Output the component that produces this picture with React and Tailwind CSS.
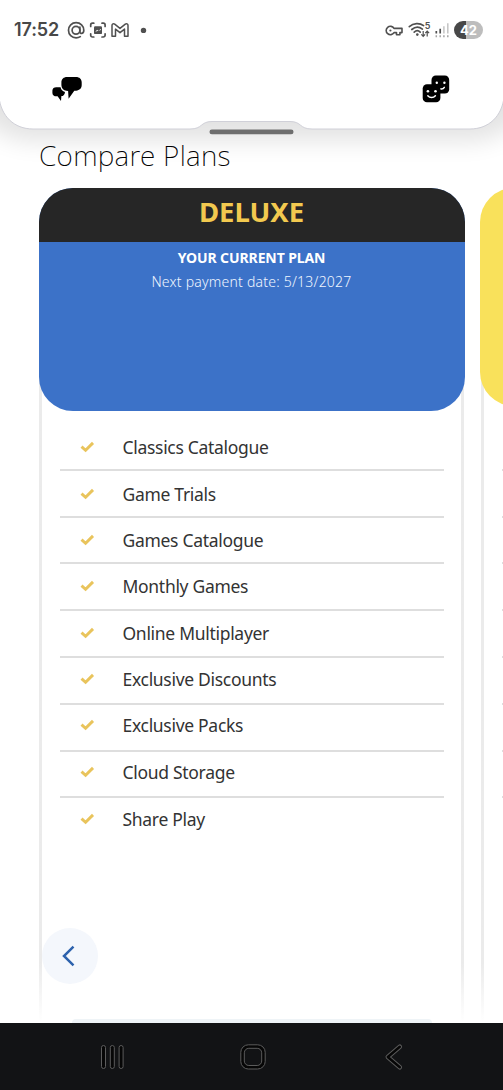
import React from 'react';

const features = [
    'Classics Catalogue',
    'Game Trials',
    'Games Catalogue',
    'Monthly Games',
    'Online Multiplayer',
    'Exclusive Discounts',
    'Exclusive Packs',
    'Cloud Storage',
    'Share Play',
];

// --- STATUS BAR ---
const StatusIcons = () => (
    <svg className="ml-2 h-6 w-[86px]" viewBox="66 18 86 24" fill="none" stroke="#505050" strokeWidth="1.7" strokeLinecap="round">
        {/* at sign */}
        <circle cx="76" cy="30.3" r="3.9" />
        <path d="M79.9 27v4.4c0 3.2 3.9 2.5 3.9-1.2 0-4.3-3.4-7.5-7.7-7.5s-7.6 3.3-7.6 7.6 3.3 7.5 7.6 7.5c1.7 0 3-.4 4.2-1.2" />
        {/* screenshot frame */}
        <path d="M93.8 23.2h-1.3a1.8 1.8 0 0 0-1.8 1.8v1.4M102 23.2h1.3a1.8 1.8 0 0 1 1.8 1.8v1.4M90.7 33.8v1.4a1.8 1.8 0 0 0 1.8 1.8h1.3M105.1 33.8v1.4a1.8 1.8 0 0 1-1.8 1.8H102" />
        <rect x="94" y="26.3" width="8" height="7.8" rx="1.2" fill="#505050" stroke="none" />
        <path d="M95.3 31.7l1.8-2 1.2 1 2.7-1.7v1z" fill="#fff" stroke="none" />
        {/* mail */}
        <path d="M112 36.2V25.4c0-1.5 1.6-2.1 2.7-1.2l5.3 4.2 5.3-4.2c1.1-.9 2.7-.3 2.7 1.2v10.8h-3.5v-7.1l-4.5 3.6-4.5-3.6v7.1z" strokeWidth="1.5" strokeLinejoin="round" />
        <circle cx="143.5" cy="30.4" r="2.7" fill="#505050" stroke="none" />
    </svg>
);

const ConnectionIcons = () => (
    <svg className="h-6 w-[66px]" viewBox="384 18 66 24" fill="none" stroke="#505050" strokeWidth="1.6">
        {/* key */}
        <path d="M394 28.4h8v4.2h-2.1v2.2h-3.4v-2.2H394a4.2 4.2 0 1 1 0-4.2z" strokeLinejoin="round" />
        <circle cx="390.4" cy="30.5" r="1.1" fill="#505050" stroke="none" />
        {/* wifi */}
        <path d="M409.3 26.6c4.2-3.8 10.4-3.9 14.3-1M411.8 29.5c3.4-2.9 7.4-2.9 10.6-.4M414.2 32.1c1.9-1.7 4.2-1.7 6 0" strokeLinecap="round" strokeWidth="1.7" />
        <circle cx="417.3" cy="34.6" r="1.3" fill="#505050" stroke="none" />
        <path d="M423.2 31v5M421.3 34.4l1.9 2 1.9-2M427.2 36.5v-5M425.3 33.2l1.9-2 1.9 2" strokeWidth="1.2" />
        <text x="424.8" y="28.6" className="font-['Inter',sans-serif] text-[9px] font-semibold" fill="#505050" stroke="none">5</text>
        {/* signal */}
        <path d="M436.3 31v2.4M440.2 28.8v4.6" strokeWidth="1.7" />
        <path d="M443.9 26.2v7.2M447.8 23.2v10.2" stroke="#c4c4c4" strokeWidth="1.5" />
        <path d="M436.3 35.3v2M440.2 35.3v2M443.9 35.3v2M447.8 35.3v2" stroke="#a5a5a5" strokeWidth="1.5" />
    </svg>
);

const StatusBar = () => (
    <div className="flex h-[60px] items-center pl-[14px] pr-[20px]">
        <span className="w-[44px] whitespace-nowrap font-['Inter',sans-serif] text-[18px] font-semibold leading-6 tracking-[-0.1px] text-[#484848]">17:52</span>
        <StatusIcons />
        <div className="ml-auto flex items-center">
            <ConnectionIcons />
            <div className="ml-[4px] flex h-[18px] w-[29px] items-center justify-center rounded-full bg-linear-to-r from-[#484848] from-42% to-[#bdbdbd] to-42% font-['Inter',sans-serif] text-[13px] font-bold leading-none text-white">42</div>
        </div>
    </div>
);

// --- TOP SHEET ---
const ChatIcon = () => (
    <svg className="h-[26px] w-[30px]" viewBox="52 76 30 26">
        <path d="M56.2 87.2H60.6C61 89.6 62.6 91.2 65 91.9C64.8 94.6 63.4 96 61.4 96.1L61 101L57.6 96.3H56.4C54.2 96.3 52.4 95 52.4 92.9V90.5C52.4 88.4 54.2 87.2 56.2 87.2Z" />
        <path d="M67 76.9h9c3.5 0 5.7 2.2 5.7 5.4v2.8c0 3.3-2.2 5.4-5.5 5.6l-1.900.1-5.700 8-.5-7.900-1.700-.2c-3-.2-5-2.300-5-5.400v-2.900c0-3.300 2.300-5.500 5.600-5.500z" />
    </svg>
);

const FacesIcon = () => (
    <svg className="h-[30px] w-[30px]" viewBox="421 74 30 30">
        <rect x="431.5" y="75.6" width="17.7" height="18" rx="4.3" />
        <circle cx="436.8" cy="82.7" r="1.2" fill="#fff" />
        <circle cx="444.4" cy="82.7" r="1.2" fill="#fff" />
        <path d="M440.3 88.8c1.7.4 3.2-.1 4-1.5" stroke="#fff" strokeWidth="1.5" strokeLinecap="round" fill="none" />
        <rect x="422.7" y="84.3" width="17.7" height="18" rx="4.3" />
        <circle cx="427.9" cy="91.3" r="1.3" fill="#fff" />
        <circle cx="435.5" cy="91.3" r="1.3" fill="#fff" />
        <path d="M427.8 95.8c2 2.4 5.6 2.4 7.6 0" stroke="#fff" strokeWidth="1.5" strokeLinecap="round" fill="none" />
    </svg>
);

const TopSheet = () => (
    <header className="relative z-10 h-[130px]">
        {/* sheet outline with the notch for the drag handle */}
        <svg className="absolute left-0 top-0 -z-10 h-[180px] w-[503px]" viewBox="0 0 503 180">
            <defs>
                <filter id="sheetShadow" x="-20%" y="-20%" width="140%" height="180%">
                    <feGaussianBlur stdDeviation="12" />
                </filter>
            </defs>
            <path d="M-30 0H533V106Q503 141 470 141H33Q0 141 -30 106Z" fill="#000" opacity=".11" filter="url(#sheetShadow)" />
            <path
                d="M-1 -1H504V97C502 116 489 129 470 129H312C299 129 302 121.5 290 121.5H212C200 121.5 203 129 190 129H33C14 129 1 116 -1 97Z"
                fill="#fff"
                stroke="#d0d0d8"
                strokeWidth="1"
            />
            <rect x="209.5" y="129.5" width="84" height="4.7" rx="2.3" fill="#6e6e6e" />
        </svg>
        <StatusBar />
        <div className="flex items-center justify-between pl-[52px] pr-[52px] pt-[14px]">
            <ChatIcon />
            <FacesIcon />
        </div>
    </header>
);

// --- PLAN CARDS ---
const CheckIcon = () => (
    <svg className="h-[12px] w-[15px] shrink-0" viewBox="0 0 15 12" fill="none">
        <path d="M1.5 5.6l4.1 3.7L13 1.9" stroke="#e9c45c" strokeWidth="2.9" />
    </svg>
);

const CardEdge = ({ className }) => (
    <div className={`w-[3px] bg-linear-to-b from-[#ebebeb] from-91% to-white ${className}`} />
);

const DeluxeCard = () => (
    <section className="flex h-[834px] w-[426px] shrink-0 flex-col">
        <div className="z-[1] flex h-[223px] flex-col overflow-hidden rounded-[34px] bg-[#3c72c8] text-center text-white">
            <h2 className="h-[54px] bg-[#262626] text-[27.5px] font-bold leading-[48px] text-[#f2c94f]">DELUXE</h2>
            <p className="mt-[4px] text-[14px] font-bold leading-6 tracking-[-0.1px]">YOUR CURRENT PLAN</p>
            <p className="text-[14px] font-light leading-[23px] tracking-[0.23px] text-[#f0f6ff]">Next payment date: 5/13/2027</p>
        </div>
        <div className="-mt-[34px] flex flex-1">
            <CardEdge className="ml-[0.5px]" />
            <ul className="w-[420px] px-[18px] pt-[47px]">
                {features.map((feature, index) => (
                    <li
                        key={feature}
                        className="flex h-[46.8px] items-center border-b-2 border-[#dedede] pl-[19.5px] pt-[2px] last:border-b-0"
                        style={{ paddingBottom: index * 0.95 }}
                    >
                        <CheckIcon />
                        <span className="ml-[28px] text-[17.5px] leading-6 tracking-[-0.3px] text-[#333]">{feature}</span>
                    </li>
                ))}
            </ul>
            <CardEdge className="-ml-px" />
        </div>
    </section>
);

const NextCard = () => (
    <section className="flex h-[834px] w-[427px] shrink-0 flex-col">
        <div className="z-[1] h-[218px] rounded-[34px] bg-[#f9e15b]" />
        <div className="-mt-[34px] flex flex-1">
            <CardEdge className="ml-px" />
            <ul className="w-[420px] pl-[18px] pt-[52px]">
                {features.slice(1).map((feature) => (
                    <li key={feature} className="h-[46.8px] border-b-2 border-[#dedede]" />
                ))}
            </ul>
        </div>
    </section>
);

// --- ANDROID NAVIGATION ---
const NavigationBar = () => (
    <nav className="relative z-10 h-[67px] bg-[#121315]">
        <svg className="h-[67px] w-[503px]" viewBox="0 1023 503 67" fill="none" stroke="#5c5c5c">
            <g fill="#060606">
                <rect x="101.5" y="1045.5" width="4" height="23" rx="2" />
                <rect x="110.3" y="1045.5" width="4" height="23" rx="2" />
                <rect x="119.1" y="1045.5" width="4" height="23" rx="2" />
            </g>
            <rect x="240.8" y="1044.8" width="24.4" height="24.2" rx="7.5" fill="#060606" />
            <rect x="244.3" y="1048.3" width="17.4" height="17.2" rx="4.5" fill="#121315" />
            <path d="M399.8 1046.7L387.8 1057l12 10.3" stroke="#5c5c5c" strokeWidth="4.5" strokeLinecap="round" strokeLinejoin="round" />
            <path d="M399.8 1046.7L387.8 1057l12 10.3" stroke="#060606" strokeWidth="2.5" strokeLinecap="round" strokeLinejoin="round" />
        </svg>
    </nav>
);

export default function App() {
    return (
        <div className="flex h-[1090px] w-[503px] flex-col overflow-hidden bg-white font-['Noto_Sans',sans-serif]">
            <TopSheet />
            <main className="relative h-[893px]">
                <h1 className="relative z-20 h-[58px] pl-[39px] text-[28px] font-extralight leading-[51px] tracking-[0.3px] text-black">Compare Plans</h1>
                <div className="flex gap-[15.5px] pl-[38.5px]">
                    <DeluxeCard />
                    <NextCard />
                </div>
                <button type="button" aria-label="Previous plan" className="absolute left-[42px] top-[798px] z-10 flex size-[56px] items-center justify-center rounded-full bg-[#f4f7fc]">
                    <svg className="-ml-[4px] h-[22px] w-[14px]" viewBox="0 0 14 22" fill="none" stroke="#2d62ad" strokeWidth="2.5">
                        <path d="M12.5 1.7L3 11l9.5 9.3" />
                    </svg>
                </button>
                {/* top edge of the panel below */}
                <div className="absolute bottom-0 left-[72px] h-[4px] w-[360px] rounded-t-full bg-[#eff4f7]" />
            </main>
            <NavigationBar />
        </div>
    );
}
